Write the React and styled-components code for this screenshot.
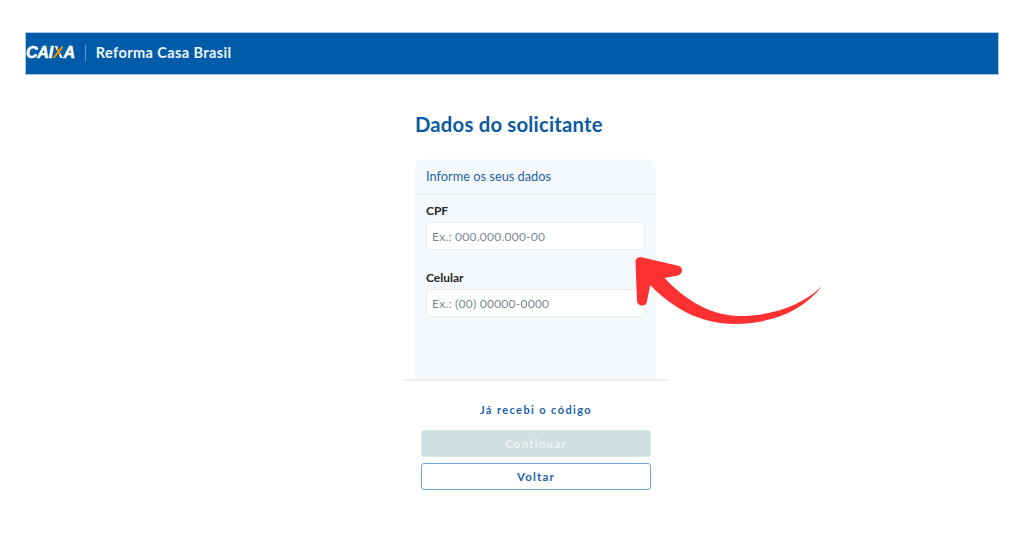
import React from "react";
import styled, { createGlobalStyle } from "styled-components";

const GlobalStyle = createGlobalStyle`
  html, body {
    margin: 0;
    padding: 0;
    background: #ffffff;
    font-family: "Lato", "Open Sans", sans-serif;
  }
  * {
    box-sizing: border-box;
  }
`;

const Page = styled.div`
  position: relative;
  width: 1024px;
  height: 536px;
  padding: 33px 26px 0;
  overflow: hidden;
`;

const Header = styled.header`
  display: flex;
  align-items: center;
  height: 41px;
  padding-bottom: 2px;
  background: #005ca9;
  box-shadow: 0 0 0 1px #a9c9e6;
  overflow: hidden;
`;

const Logo = styled.div`
  font-family: "Liberation Sans", sans-serif;
  font-size: 16px;
  font-weight: 700;
  font-style: italic;
  letter-spacing: -0.2px;
  color: #ffffff;
  -webkit-text-stroke: 0.5px #ffffff;
  line-height: 1;
`;

const LogoX = styled.span`
  background: linear-gradient(118deg, #ffffff 0 36%, #f39200 36% 64%, #ffffff 64%);
  -webkit-background-clip: text;
  background-clip: text;
  color: transparent;
  -webkit-text-stroke: 0;
`;

const HeaderDivider = styled.span`
  width: 1px;
  height: 16px;
  margin: 0 10px 0 10px;
  background: #5f97c9;
`;

const HeaderTitle = styled.span`
  font-size: 14.5px;
  font-weight: 700;
  letter-spacing: 0.4px;
  color: #eef5fb;
`;

const Main = styled.main`
  display: flex;
  flex-direction: column;
  width: 264px;
  margin-left: 378px;
  padding-top: 36px;
`;

const Title = styled.h1`
  margin: 0 0 21px 11px;
  font-size: 20.3px;
  line-height: 28px;
  font-weight: 700;
  letter-spacing: 0.2px;
  color: #0b5aa2;
`;

const Card = styled.section`
  width: 241px;
  height: 220px;
  margin-left: 11px;
  background: #f6f9fb;
  border-radius: 8px 8px 0 0;
`;

const CardHeader = styled.div`
  display: flex;
  align-items: center;
  height: 36px;
  padding-left: 11px;
  border-bottom: 2px solid #edf1f3;
  font-size: 12.8px;
  color: #1d63a5;
`;

const Field = styled.div`
  display: flex;
  flex-direction: column;
  gap: 4px;
  padding: 9px 11px 0;
  margin-bottom: 12px;
`;

const Label = styled.label`
  font-size: 12px;
  line-height: 14px;
  font-weight: 700;
  color: #22282c;
`;

const Input = styled.input`
  width: 219px;
  height: 28px;
  padding: 0 5px;
  background: #ffffff;
  border: 1px solid #e9eff1;
  border-radius: 3px;
  font-family: inherit;
  font-size: 12px;
  letter-spacing: 0.25px;
  outline: none;
  &::placeholder {
    color: #7b8a90;
    opacity: 1;
  }
`;

const Footer = styled.div`
  display: flex;
  flex-direction: column;
  align-items: center;
  gap: 6px;
  border-top: 2px solid #eff2f3;
`;

const TextLink = styled.a`
  margin: 22px 0 7px;
  font-size: 11px;
  line-height: 14px;
  font-weight: 700;
  letter-spacing: 1.4px;
  color: #1d63a5;
`;

const Button = styled.button`
  width: 230px;
  height: 27px;
  padding: 0;
  border-radius: 3px;
  font-family: inherit;
  font-size: 11.5px;
  font-weight: 700;
  letter-spacing: 1.2px;
  color: ${(props) => (props.disabled ? "#eef4f4" : "#1d63a5")};
  background: ${(props) => (props.disabled ? "#d0dfe0" : "#ffffff")};
  border: ${(props) => (props.disabled ? "1px solid #d8e5e6" : "1px solid #6fa6d8")};
`;

const ArrowSvg = styled.svg`
  position: absolute;
  left: 630px;
  top: 250px;
`;

const Arrow = () => (
  <ArrowSvg width="200" height="80" viewBox="630 250 200 80">
    <path
      d="M660 273 C680 296 708 316 740 316 C770 316 802 306 822 286 C804 310 772 324 735 324 C700 324 672 308 648 283 Z"
      fill="#fd3131"
    />
    <path
      d="M677 270.5 L640.5 262 L642 300.5 L647 276 Z"
      fill="#fd3131"
      stroke="#fd3131"
      strokeWidth="10"
      strokeLinejoin="round"
      strokeLinecap="round"
    />
  </ArrowSvg>
);

export default function App() {
  return (
    <Page>
      <GlobalStyle />
      <Header>
        <Logo>
          CAI<LogoX>X</LogoX>A
        </Logo>
        <HeaderDivider />
        <HeaderTitle>Reforma Casa Brasil</HeaderTitle>
      </Header>
      <Main>
        <Title>Dados do solicitante</Title>
        <Card>
          <CardHeader>Informe os seus dados</CardHeader>
          <Field>
            <Label>CPF</Label>
            <Input placeholder="Ex.: 000.000.000-00" />
          </Field>
          <Field>
            <Label>Celular</Label>
            <Input placeholder="Ex.: (00) 00000-0000" />
          </Field>
        </Card>
        <Footer>
          <TextLink>Já recebi o código</TextLink>
          <Button disabled>Continuar</Button>
          <Button>Voltar</Button>
        </Footer>
      </Main>
      <Arrow />
    </Page>
  );
}
